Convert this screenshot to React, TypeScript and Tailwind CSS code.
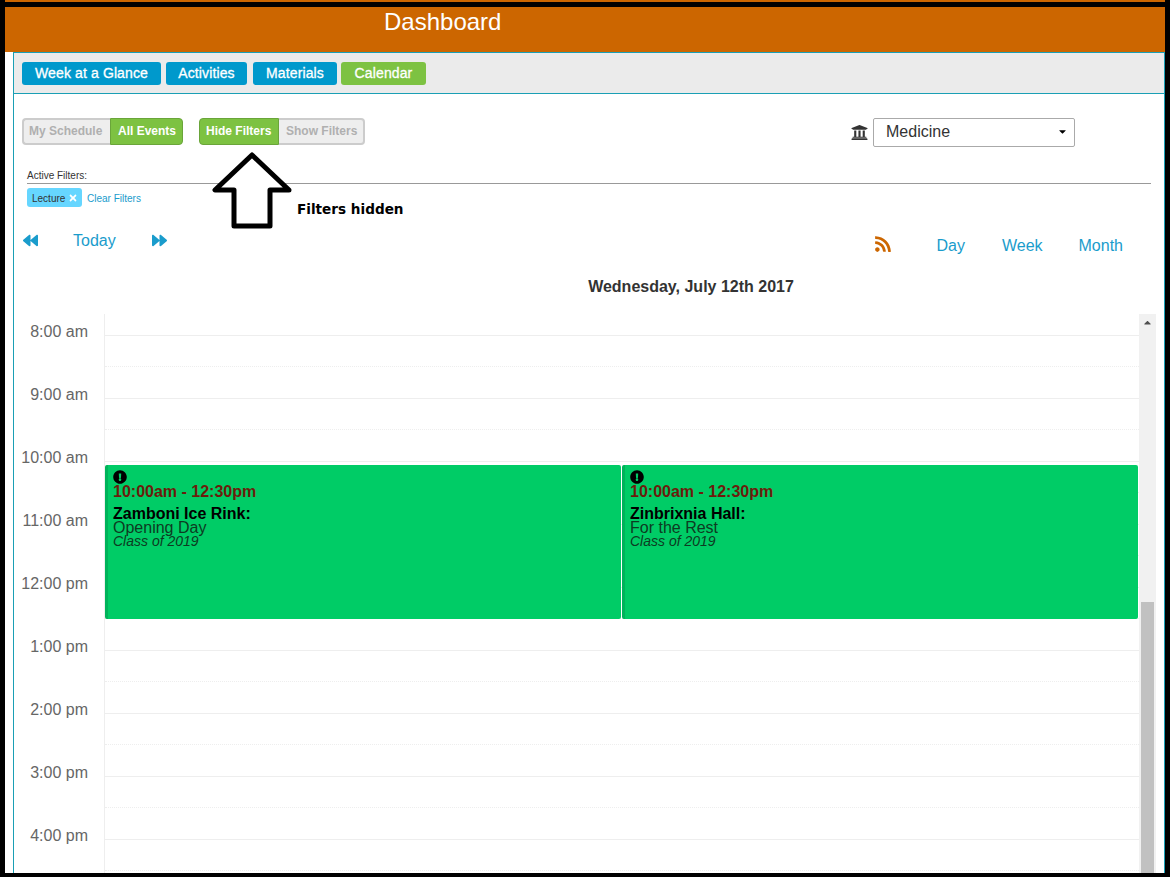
import React from "react";
import { FaUniversity, FaRss, FaBackward, FaForward, FaExclamationCircle, FaTimes, FaCaretUp, FaCaretDown } from "react-icons/fa";

const hours = ["8:00 am","9:00 am","10:00 am","11:00 am","12:00 pm","1:00 pm","2:00 pm","3:00 pm","4:00 pm"];

function Tab({ label, width, active }: { label: string; width: string; active?: boolean }) {
  return (
    <div className={`h-[23px] rounded-[3px] text-center text-[14px] leading-[23px] tracking-[0.12px] text-white [-webkit-text-stroke:0.3px_white] ${width} ${active ? "bg-[#7dc242]" : "bg-[#0099cc]"}`}>
      {label}
    </div>
  );
}

function Event({ place, title, left }: { place: string; title: string; left: string }) {
  return (
    <div className={`absolute top-[151px] h-[154px] w-[516px] rounded-[2px] border-l-[3px] border-[#00b35a] bg-[#00cc66] pl-[5px] pt-[5px] ${left}`}>
      <FaExclamationCircle className="text-[14px] text-black" />
      <div className="text-[16px] font-bold leading-[16px] text-[#6b1c0c]">10:00am - 12:30pm</div>
      <div className="mt-[7px] text-[16px] font-bold leading-[14px] text-black">{place}</div>
      <div className="text-[16px] leading-[14px] text-[#0d3b22]">{title}</div>
      <div className="text-[14px] italic leading-[13px] text-[#0d3b22]">Class of 2019</div>
    </div>
  );
}

export default function App() {
  return (
    <div className="relative h-[877px] w-[1170px] overflow-hidden border-x-[5px] border-b-[4px] border-black bg-white font-['Liberation_Sans',sans-serif]">
      <div className="h-[2px] -mx-[5px] bg-[#cc6600]" />
      <div className="h-[5px] -mx-[5px] bg-black" />
      <div className="h-[45px] bg-[#cc6600] pl-[379px] text-[24px] leading-[30px] text-white">Dashboard</div>

      <div className="ml-[8px] h-[830px] border-x border-[#1a9fb5]">
        <div className="flex h-[42px] items-center border-y border-[#1a9fb5] bg-[#ebebeb] pl-[8px]">
          <Tab label="Week at a Glance" width="w-[139px]" />
          <div className="w-[5px]" />
          <Tab label="Activities" width="w-[81px]" />
          <div className="w-[6px]" />
          <Tab label="Materials" width="w-[84px]" />
          <div className="w-[4px]" />
          <Tab label="Calendar" width="w-[85px]" active />
        </div>

        <div className="mt-[24px] flex h-[29px] items-start pl-[8px] text-[12px] font-bold">
          <div className="flex h-[27px] leading-[23px]">
            <div className="w-[88px] rounded-l-[4px] border-2 border-r-0 border-[#cccccc] bg-[#eeeeee] pl-[5px] text-[#b0b0b0]">My Schedule</div>
            <div className="w-[73px] rounded-r-[4px] border border-[#6aa53a] bg-[#7dc242] pl-[7px] leading-[25px] text-white">All Events</div>
          </div>
          <div className="ml-[16px] flex h-[27px] leading-[25px]">
            <div className="w-[80px] rounded-l-[4px] border border-[#6aa53a] bg-[#7dc242] pl-[6px] text-white">Hide Filters</div>
            <div className="w-[86px] rounded-r-[4px] border-2 border-l-0 border-[#cccccc] bg-[#eeeeee] pl-[7px] leading-[23px] text-[#b0b0b0]">Show Filters</div>
          </div>
          <div className="ml-auto mr-[89px] flex items-center gap-[5px]">
            <FaUniversity className="text-[17px] text-[#333333]" />
            <div className="relative">
              <select className="block h-[29px] w-[202px] appearance-none rounded-[2px] border border-[#aaaaaa] bg-white pb-[2px] pl-[12px] font-['Liberation_Sans',sans-serif] text-[16px] font-normal text-[#333333]" defaultValue="Medicine">
                <option>Medicine</option>
              </select>
              <FaCaretDown className="pointer-events-none absolute right-[7px] top-[8px] text-[11px] text-black" />
            </div>
          </div>
        </div>

        <div className="mx-[13px] mt-[23px] h-[14px] border-b border-[#999999] text-[10px] leading-[11px] text-[#333333]">Active Filters:</div>
        <div className="ml-[13px] mt-[4px] flex h-[19px] items-center gap-[5px] text-[10px]">
          <div className="flex h-[19px] w-[55px] items-center gap-[3px] rounded-[3px] bg-[#66d6ff] pl-[5px] pt-px text-[#333333]">
            Lecture <FaTimes className="text-[10px] text-white" />
          </div>
          <div className="pt-px text-[#1a9ccc]">Clear Filters</div>
        </div>

        <div className="mt-[24px] flex h-[25px] pl-[9px] text-[16px] text-[#1a9ccc]">
          <div className="flex h-[20px] items-center">
            <FaBackward className="mb-[2px] text-[15px]" />
            <span className="ml-[35px]">Today</span>
            <FaForward className="mb-[2px] ml-[36px] text-[15px]" />
          </div>
          <div className="ml-auto mr-[41px] flex h-[29px] items-center">
            <FaRss className="mb-[4px] text-[18px] text-[#cc6600]" />
            <span className="ml-[44px]">Day</span>
            <span className="ml-[37px]">Week</span>
            <span className="ml-[36px]">Month</span>
          </div>
        </div>

        <div className="mt-[21px] h-[20px] pl-[204px] text-center text-[16px] font-bold leading-[20px] text-[#333333]">Wednesday, July 12th 2017</div>

        <div className="mt-[17px] flex h-[560px] overflow-hidden">
          <div className="w-[90px] pr-[16px] pt-[9px] text-right text-[16px] leading-[18px] text-[#666666]">
            {hours.map((h) => (
              <div key={h} className="h-[63px]">{h}</div>
            ))}
          </div>
          <div className="relative w-[1035px] border-l border-[#eeeeee]">
            <div className="h-[22px] border-b border-[#eeeeee]" />
            {hours.map((h) => (
              <div key={h} className="h-[63px] border-b border-[#eeeeee]">
                <div className="h-[31px] border-b border-dotted border-[#eeeeee]" />
              </div>
            ))}
            <Event left="left-0" place="Zamboni Ice Rink:" title="Opening Day" />
            <Event left="left-[517px]" place="Zinbrixnia Hall:" title="For the Rest" />
          </div>
          <div className="w-[17px] bg-[#f1f1f1]">
            <div className="flex h-[17px] items-center justify-center">
              <FaCaretUp className="text-[11px] text-[#505050]" />
            </div>
            <div className="mx-[2px] mt-[271px] h-[300px] bg-[#c1c1c1]" />
          </div>
        </div>
      </div>

      <svg className="absolute left-[207px] top-[150px]" width="84" height="84" viewBox="0 0 84 84">
        <path d="M40 5 L3 40 L22 40 L22 76 L58 76 L58 40 L77 40 Z" fill="white" stroke="black" strokeWidth="5" strokeLinejoin="round" />
      </svg>
      <div className="absolute left-[292px] top-[201px] font-['DejaVu_Sans',sans-serif] text-[13.6px] font-bold leading-[16px] text-black">Filters hidden</div>
    </div>
  );
}
